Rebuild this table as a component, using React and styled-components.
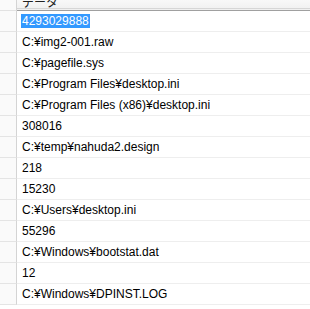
import styled, { createGlobalStyle } from 'styled-components';

const GlobalStyle = createGlobalStyle`
  html, body {
    margin: 0;
    padding: 0;
    background: #ffffff;
    overflow: hidden;
  }
`;

const rows = [
  '4293029888',
  'C:¥img2-001.raw',
  'C:¥pagefile.sys',
  'C:¥Program Files¥desktop.ini',
  'C:¥Program Files (x86)¥desktop.ini',
  '308016',
  'C:¥temp¥nahuda2.design',
  '218',
  '15230',
  'C:¥Users¥desktop.ini',
  '55296',
  'C:¥Windows¥bootstat.dat',
  '12',
  'C:¥Windows¥DPINST.LOG',
];

const Grid = styled.div`
  width: 310px;
  height: 309px;
  display: grid;
  grid-template-columns: 17px 1fr;
  grid-auto-rows: 21px;
  grid-template-rows: 11px;
  font-family: "Liberation Sans", "Noto Sans CJK JP", sans-serif;
  font-size: 12px;
  color: #000;
  overflow: hidden;
`;

const Corner = styled.div`
  background: #fafafa;
  border-right: 1px solid #d4d4d4;
  border-bottom: 1px solid #e2e2e2;
  box-sizing: border-box;
`;

const HeaderCell = styled.div`
  position: relative;
  background: linear-gradient(#f8f8f8, #efefef);
  border-top: none;
  box-sizing: border-box;
  overflow: hidden;

  &::after {
    content: '';
    position: absolute;
    left: 0;
    right: 0;
    bottom: 0;
    height: 3px;
    border-top: 1px solid #d6d6d6;
    border-bottom: 1px solid #a0a0a0;
    background: #f0f0f0;
    box-sizing: border-box;
  }
`;

const HeaderLabel = styled.span`
  position: absolute;
  left: 5px;
  bottom: 2px;
  font-size: 12px;
  line-height: 12px;
  color: #222;
`;

const RowHead = styled.div`
  background: #fafafa;
  border-right: 1px solid #d4d4d4;
  border-bottom: 1px solid #e4e4e4;
  box-sizing: border-box;
`;

const Cell = styled.div`
  display: flex;
  align-items: center;
  padding-left: 4px;
  border-bottom: 1px solid #eeeeee;
  box-sizing: border-box;
  white-space: nowrap;
`;

const Value = styled.span`
  padding: 0 1px;
  line-height: 14px;
  background: ${p => (p.$selected ? '#3399ff' : 'transparent')};
  color: ${p => (p.$selected ? '#ffffff' : '#000000')};
`;

export default function App() {
  return (
    <>
      <GlobalStyle />
      <Grid>
        <Corner />
        <HeaderCell>
          <HeaderLabel>データ</HeaderLabel>
        </HeaderCell>
        {rows.map((text, i) => (
          <Row key={i} text={text} selected={i === 0} />
        ))}
      </Grid>
    </>
  );
}

function Row({ text, selected }) {
  return (
    <>
      <RowHead />
      <Cell>
        <Value $selected={selected}>{text}</Value>
      </Cell>
    </>
  );
}
